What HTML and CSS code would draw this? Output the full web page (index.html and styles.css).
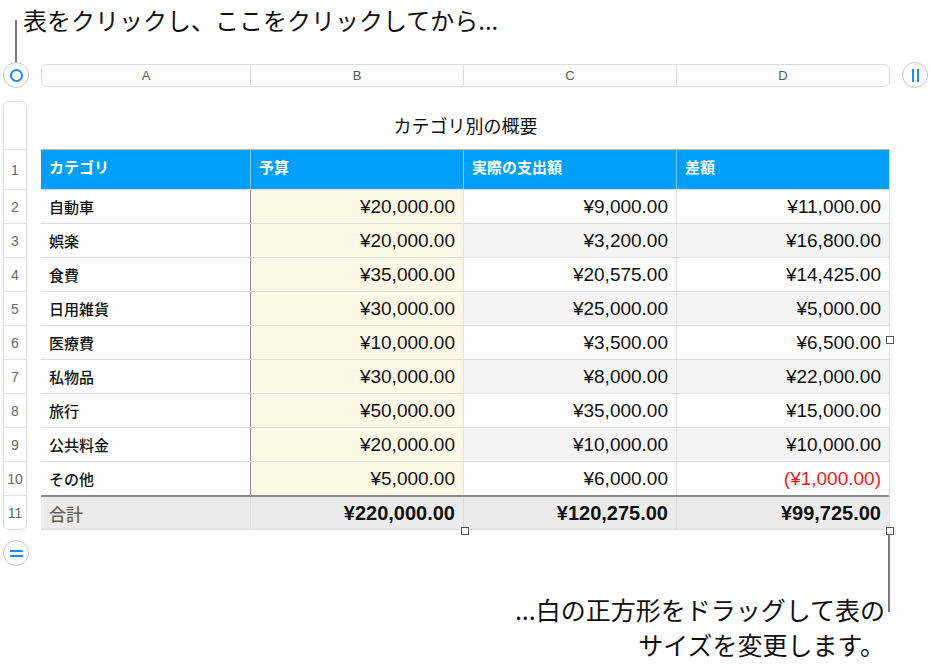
FILE: index.html
```html
<!DOCTYPE html>
<html lang="ja">
<head>
<meta charset="utf-8">
<link rel="stylesheet" href="styles.css">
</head>
<body>
<div class="page">
  <div class="callout-top">表をクリックし、ここをクリックしてから...</div>
  <div class="line-top"></div>
  <div class="colbar-row">
    <div class="round-btn"><span class="ring"></span></div>
    <div class="colbar">
      <div class="colhead">A</div>
      <div class="colhead">B</div>
      <div class="colhead">C</div>
      <div class="colhead">D</div>
    </div>
    <div class="round-btn"><span class="bars"><i></i><i></i></span></div>
  </div>
  <div class="main">
    <div class="side">
      <div class="rownums">
        <div class="rn rn-top"></div>
        <div class="rn rn-1">1</div>
        <div class="rn">2</div>
        <div class="rn">3</div>
        <div class="rn">4</div>
        <div class="rn">5</div>
        <div class="rn">6</div>
        <div class="rn">7</div>
        <div class="rn">8</div>
        <div class="rn">9</div>
        <div class="rn">10</div>
        <div class="rn">11</div>
      </div>
      <div class="round-btn eq-btn"><span class="eq"><i></i><i></i></span></div>
    </div>
    <div class="tablewrap">
      <div class="title">カテゴリ別の概要</div>
      <div class="table">
        <div class="row head">
          <div class="c a">カテゴリ</div><div class="c">予算</div><div class="c">実際の支出額</div><div class="c">差額</div>
        </div>
        <div class="row">
          <div class="c a">自動車</div><div class="c n b">¥20,000.00</div><div class="c n">¥9,000.00</div><div class="c n">¥11,000.00</div>
        </div>
        <div class="row alt">
          <div class="c a">娯楽</div><div class="c n b">¥20,000.00</div><div class="c n">¥3,200.00</div><div class="c n">¥16,800.00</div>
        </div>
        <div class="row">
          <div class="c a">食費</div><div class="c n b">¥35,000.00</div><div class="c n">¥20,575.00</div><div class="c n">¥14,425.00</div>
        </div>
        <div class="row alt">
          <div class="c a">日用雑貨</div><div class="c n b">¥30,000.00</div><div class="c n">¥25,000.00</div><div class="c n">¥5,000.00</div>
        </div>
        <div class="row">
          <div class="c a">医療費</div><div class="c n b">¥10,000.00</div><div class="c n">¥3,500.00</div><div class="c n">¥6,500.00</div>
        </div>
        <div class="row alt">
          <div class="c a">私物品</div><div class="c n b">¥30,000.00</div><div class="c n">¥8,000.00</div><div class="c n">¥22,000.00</div>
        </div>
        <div class="row">
          <div class="c a">旅行</div><div class="c n b">¥50,000.00</div><div class="c n">¥35,000.00</div><div class="c n">¥15,000.00</div>
        </div>
        <div class="row alt">
          <div class="c a">公共料金</div><div class="c n b">¥20,000.00</div><div class="c n">¥10,000.00</div><div class="c n">¥10,000.00</div>
        </div>
        <div class="row">
          <div class="c a">その他</div><div class="c n b">¥5,000.00</div><div class="c n">¥6,000.00</div><div class="c n neg">(¥1,000.00)</div>
        </div>
        <div class="row total">
          <div class="c a">合計</div><div class="c n">¥220,000.00</div><div class="c n">¥120,275.00</div><div class="c n">¥99,725.00</div>
        </div>
        <span class="handle h-right"></span>
        <span class="handle h-bottom"></span>
        <span class="handle h-corner"></span>
        <span class="line-bottom"></span>
      </div>
    </div>
  </div>
  <div class="callout-bottom">...白の正方形をドラッグして表の<br>サイズを変更します。</div>
</div>
</body>
</html>
```

FILE: styles.css
```css
* { box-sizing: border-box; }
html, body { margin: 0; padding: 0; background: #fff; }
body {
  font-family: "Liberation Sans", "Noto Sans CJK JP", sans-serif;
  color: #111;
  width: 931px;
  height: 668px;
  overflow: hidden;
}
.page { position: relative; width: 931px; height: 668px; }

.callout-top {
  font-family: "Noto Sans CJK JP", sans-serif;
  font-size: 24px;
  line-height: 40px;
  height: 40px;
  padding-left: 23px;
  color: #111;
}
.line-top {
  position: absolute;
  left: 15px;
  top: 20px;
  width: 2px;
  height: 42px;
  background: #7a7a7a;
}

.colbar-row {
  display: flex;
  align-items: center;
  margin-top: 22px;
  padding-left: 3px;
  height: 26px;
}
.round-btn {
  width: 26px;
  height: 26px;
  border-radius: 50%;
  border: 1px solid #c9c9c9;
  background: #fff;
  display: flex;
  align-items: center;
  justify-content: center;
  flex: none;
}
.ring {
  width: 13px;
  height: 13px;
  border: 2px solid #1f8cf5;
  border-radius: 50%;
}
.bars { display: flex; gap: 3px; }
.bars i { display: block; width: 2px; height: 13px; background: #1f8cf5; }
.eq { display: flex; flex-direction: column; gap: 3px; }
.eq i { display: block; width: 13px; height: 2px; background: #1f8cf5; }

.colbar {
  display: flex;
  margin-left: 12px;
  width: 849px;
  height: 23px;
  border: 1px solid #dcdcdc;
  border-radius: 6px;
  margin-right: 12px;
}
.colhead {
  font-size: 13px;
  color: #555;
  display: flex;
  align-items: center;
  justify-content: center;
  border-right: 1px solid #dcdcdc;
}
.colhead:nth-child(1) { width: 209px; }
.colhead:nth-child(2) { width: 213px; }
.colhead:nth-child(3) { width: 213px; }
.colhead:nth-child(4) { flex: 1; border-right: none; }

.main {
  display: flex;
  margin-top: 13px;
  padding-left: 3px;
}
.side {
  width: 38px;
  display: flex;
  flex-direction: column;
}
.rownums {
  width: 24px;
  border: 1px solid #dedede;
  border-radius: 6px;
  overflow: hidden;
}
.rn {
  height: 34px;
  font-size: 14px;
  color: #666;
  display: flex;
  align-items: center;
  justify-content: center;
  border-top: 1px solid #e2e2e2;
}
.rn-top { height: 47px; border-top: none; }
.rn-1 { height: 40px; }
.eq-btn { margin-top: 10px; }

.tablewrap { width: 849px; }
.title {
  font-family: "Noto Sans CJK JP", sans-serif;
  font-size: 18px;
  height: 48px;
  line-height: 48px;
  text-align: center;
  color: #111;
}
.table { position: relative; border-right: 1px solid #e0e0e0; }
.row { display: flex; height: 34px; border-top: 1px solid #dcdcdc; }
.c {
  font-family: "Liberation Sans", "Noto Sans CJK JP", sans-serif;
  font-size: 19px;
  display: flex;
  align-items: center;
  padding: 0 8px;
  border-left: 1px solid #e2e2e2;
  white-space: nowrap;
}
.c:nth-child(1) { width: 209px; border-left: none; }
.c:nth-child(2) { width: 213px; border-left: 1px solid #8e8e8e; }
.c:nth-child(3) { width: 213px; }
.c:nth-child(4) { flex: 1; }
.c.a {
  font-family: "Noto Sans CJK JP", sans-serif;
  font-weight: 500;
  font-size: 15px;
}
.c.n { justify-content: flex-end; }
.c.b { background: #fdf7e8; }
.row.alt .c:nth-child(3), .row.alt .c:nth-child(4) { background: #f4f4f4; }
.neg { color: #ee1c1c; }

.row.head {
  height: 40px;
  background: #009ffb;
  border-top: 1px solid #b8b8b8;
}
.row.head .c {
  color: #fff;
  font-family: "Noto Sans CJK JP", sans-serif;
  font-weight: 700;
  font-size: 15px;
  align-items: flex-start;
  padding-top: 6px;
  border-left: 1px solid #7fc9ff;
}
.row.head .c:nth-child(1) { border-left: none; }

.row.total {
  height: 35px;
  background: #ebebeb;
  border-top: 2px solid #8a8a8a;
  border-bottom: 1px solid #dcdcdc;
}
.row.total .c { font-weight: 700; font-size: 20px; border-left: 1px solid #dadada; }
.row.total .c:nth-child(1) { border-left: none; }
.row.total .c.a { font-weight: 500; color: #6a5e50; font-size: 17px; }

.handle {
  position: absolute;
  width: 8px;
  height: 8px;
  background: #fff;
  border: 1px solid #555;
}
.h-right { right: -5px; top: 187px; }
.h-bottom { left: 420px; bottom: -5px; }
.h-corner { right: -5px; bottom: -5px; }
.line-bottom {
  position: absolute;
  right: -1px;
  top: calc(100% + 4px);
  width: 2px;
  height: 78px;
  background: #7a7a7a;
}

.callout-bottom {
  font-family: "Noto Sans CJK JP", sans-serif;
  font-size: 25px;
  line-height: 35px;
  text-align: right;
  width: 885px;
  margin-top: 26px;
  color: #111;
}
```
